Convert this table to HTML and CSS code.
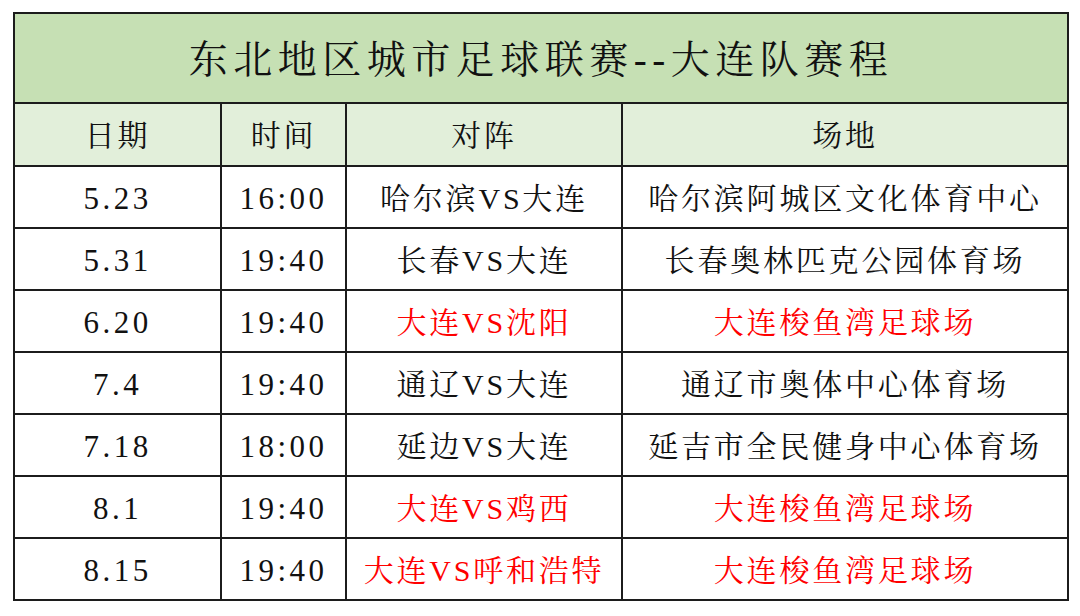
FILE: index.html
```html
<!DOCTYPE html>
<html lang="zh-CN">
<head>
<meta charset="utf-8">
<title>东北地区城市足球联赛--大连队赛程</title>
<link rel="stylesheet" href="styles.css">
</head>
<body>
<table class="schedule">
  <colgroup>
    <col class="c-date">
    <col class="c-time">
    <col class="c-match">
    <col class="c-venue">
  </colgroup>
  <thead>
    <tr class="title-row"><th colspan="4">东北地区城市足球联赛--大连队赛程</th></tr>
    <tr class="head-row"><th>日期</th><th>时间</th><th>对阵</th><th>场地</th></tr>
  </thead>
  <tbody>
    <tr><td class="num">5.23</td><td class="num">16:00</td><td>哈尔滨VS大连</td><td>哈尔滨阿城区文化体育中心</td></tr>
    <tr><td class="num">5.31</td><td class="num">19:40</td><td>长春VS大连</td><td>长春奥林匹克公园体育场</td></tr>
    <tr><td class="num">6.20</td><td class="num">19:40</td><td class="home">大连VS沈阳</td><td class="home">大连梭鱼湾足球场</td></tr>
    <tr><td class="num">7.4</td><td class="num">19:40</td><td>通辽VS大连</td><td>通辽市奥体中心体育场</td></tr>
    <tr><td class="num">7.18</td><td class="num">18:00</td><td>延边VS大连</td><td>延吉市全民健身中心体育场</td></tr>
    <tr><td class="num">8.1</td><td class="num">19:40</td><td class="home">大连VS鸡西</td><td class="home">大连梭鱼湾足球场</td></tr>
    <tr><td class="num">8.15</td><td class="num">19:40</td><td class="home">大连VS呼和浩特</td><td class="home">大连梭鱼湾足球场</td></tr>
  </tbody>
</table>
</body>
</html>
```

FILE: styles.css
```css
html, body {
  margin: 0;
  padding: 0;
  background: #ffffff;
}

body {
  padding: 12px 0 0 13px;
}

.schedule {
  border-collapse: collapse;
  table-layout: fixed;
  width: 1054px;
  font-family: "Liberation Serif", "Noto Serif CJK SC", "Noto Sans CJK SC", serif;
  color: #111111;
}

.c-date { width: 207px; }
.c-time { width: 125px; }
.c-match { width: 276px; }
.c-venue { width: 446px; }

.schedule th,
.schedule td {
  border: 2px solid #1c1c1c;
  text-align: center;
  vertical-align: middle;
  padding: 3px 0 0;
  font-weight: normal;
  font-size: 30px;
  line-height: 36px;
  letter-spacing: 2.8px;
  white-space: nowrap;
}

.title-row th {
  height: 84px;
  padding-top: 4px;
  background: #c6e0b4;
  font-size: 39px;
  line-height: 44px;
  letter-spacing: 5.5px;
}

.head-row th {
  height: 58px;
  background: #e2efda;
}

.schedule tbody td {
  height: 57px;
}

.schedule td.num {
  font-size: 31px;
  letter-spacing: 3.5px;
}

.schedule td.home {
  color: #ff0000;
}
```
